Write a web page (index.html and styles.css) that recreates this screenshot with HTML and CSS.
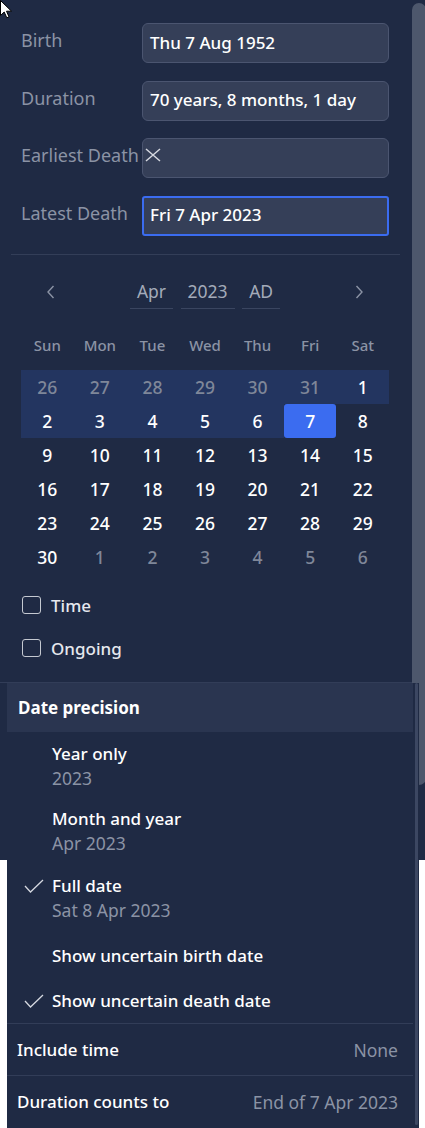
FILE: index.html
```html
<!DOCTYPE html>
<html lang="en">
<head>
<meta charset="utf-8">
<title>Date picker</title>
<link rel="stylesheet" href="styles.css">
</head>
<body>
<div class="screen">
<div class="app">
  <div class="panel">
    <div class="fields">
      <div class="field"><span class="field-label">Birth</span><div class="input">Thu 7 Aug 1952</div></div>
      <div class="field"><span class="field-label">Duration</span><div class="input">70 years, 8 months, 1 day</div></div>
      <div class="field"><span class="field-label">Earliest Death</span><div class="input input-empty"><svg class="clear-icon" width="16" height="14" viewBox="0 0 16 14"><path d="M1 1 L15 13 M15 1 L1 13" fill="none" stroke="#d5d8e0" stroke-width="1.5"/></svg></div></div>
      <div class="field"><span class="field-label">Latest Death</span><div class="input input-focus">Fri 7 Apr 2023</div></div>
    </div>
    <div class="rule"></div>
    <div class="cal-nav">
      <button class="nav-btn nav-prev"><svg width="10" height="14" viewBox="0 0 10 14"><polyline points="7.5,1 2,7 7.5,13" fill="none" stroke="#8b93a5" stroke-width="1.4"/></svg></button>
      <div class="nav-selects"><span class="sel">Apr</span><span class="sel">2023</span><span class="sel">AD</span></div>
      <button class="nav-btn nav-next"><svg width="10" height="14" viewBox="0 0 10 14"><polyline points="2.5,1 8,7 2.5,13" fill="none" stroke="#8b93a5" stroke-width="1.4"/></svg></button>
    </div>
    <div class="weekdays"><span>Sun</span><span>Mon</span><span>Tue</span><span>Wed</span><span>Thu</span><span>Fri</span><span>Sat</span></div>
    <div class="days">
      <span class="day out range">26</span><span class="day out range">27</span><span class="day out range">28</span><span class="day out range">29</span><span class="day out range">30</span><span class="day out range">31</span><span class="day range">1</span>
      <span class="day range">2</span><span class="day range">3</span><span class="day range">4</span><span class="day range">5</span><span class="day range">6</span><span class="day selected">7</span><span class="day">8</span>
      <span class="day">9</span><span class="day">10</span><span class="day">11</span><span class="day">12</span><span class="day">13</span><span class="day">14</span><span class="day">15</span>
      <span class="day">16</span><span class="day">17</span><span class="day">18</span><span class="day">19</span><span class="day">20</span><span class="day">21</span><span class="day">22</span>
      <span class="day">23</span><span class="day">24</span><span class="day">25</span><span class="day">26</span><span class="day">27</span><span class="day">28</span><span class="day">29</span>
      <span class="day">30</span><span class="day out">1</span><span class="day out">2</span><span class="day out">3</span><span class="day out">4</span><span class="day out">5</span><span class="day out">6</span>
    </div>
    <div class="checks">
      <label class="check"><span class="box"></span>Time</label>
      <label class="check"><span class="box"></span>Ongoing</label>
    </div>
    <div class="panel-divider"></div>
  </div>
  <div class="scrollbar"><div class="thumb"></div></div>
</div>

<div class="menu">
  <div class="menu-body">
    <div class="menu-head">Date precision</div>
    <div class="opt opt-first">
      <div class="opt-title">Year only</div>
      <div class="opt-sub">2023</div>
    </div>
    <div class="opt opt-second">
      <div class="opt-title">Month and year</div>
      <div class="opt-sub">Apr 2023</div>
    </div>
    <div class="opt">
      <svg class="opt-check" width="20" height="14" viewBox="0 0 20 14"><polyline points="1,7 6.5,13 19,1" fill="none" stroke="#d5d8e0" stroke-width="1.3"/></svg>
      <div class="opt-title">Full date</div>
      <div class="opt-sub">Sat 8 Apr 2023</div>
    </div>
    <div class="opt">
      <div class="opt-title">Show uncertain birth date</div>
    </div>
    <div class="opt opt-last">
      <svg class="opt-check" width="20" height="14" viewBox="0 0 20 14"><polyline points="1,7 6.5,13 19,1" fill="none" stroke="#d5d8e0" stroke-width="1.3"/></svg>
      <div class="opt-title">Show uncertain death date</div>
    </div>
    <div class="menu-sep"></div>
    <div class="menu-row"><span class="menu-row-label">Include time</span><span class="menu-row-value">None</span></div>
    <div class="menu-sep"></div>
    <div class="menu-row"><span class="menu-row-label">Duration counts to</span><span class="menu-row-value">End of 7 Apr 2023</span></div>
  </div>
  <div class="menu-scroll"><div class="menu-thumb"></div></div>
</div>

<svg class="cursor" width="13" height="20" viewBox="0 0 13 20"><path d="M0.5 0.5 L0.5 15.5 L4.2 12 L6.8 17.8 L9 16.8 L6.5 11.2 L11.5 11.2 Z" fill="#fff" stroke="#000" stroke-width="1"/></svg>
</div>
</body>
</html>
```

FILE: styles.css
```css
* { box-sizing: border-box; }

html, body {
  margin: 0;
  background: #ffffff;
}

body {
  font-family: "Noto Sans", "Open Sans", "DejaVu Sans", sans-serif;
}

.screen {
  position: relative;
  width: 425px;
  height: 1128px;
  overflow: hidden;
}

.app {
  width: 425px;
  height: 860px;
  display: flex;
  background: #1f2a44;
  color: #ffffff;
}

.panel {
  width: 412px;
  flex: none;
  padding: 23px 23px 0 21px;
}

.fields {
  display: flex;
  flex-direction: column;
  gap: 17.5px;
}

.field {
  display: grid;
  grid-template-columns: 121px 1fr;
  align-items: center;
  height: 40px;
}

.field-label {
  font-size: 18px;
  color: #8b93a5;
  padding-bottom: 6px;
  white-space: nowrap;
}

.input {
  height: 40px;
  display: flex;
  align-items: center;
  padding: 0 7px 2px;
  background: #353f58;
  border: 1px solid #4b5570;
  border-radius: 6px;
  font-size: 17px;
  font-weight: 500;
  color: #ffffff;
  white-space: nowrap;
}

.input-empty {
  align-items: flex-start;
  padding: 9px 2px 0;
}

.input-focus {
  border: 2px solid #3b6cf0;
  border-radius: 3px;
  padding: 0 6px 2px;
}

.rule {
  height: 1px;
  background: #333e58;
  margin: 18.5px -11px 0 -10px;
}

.cal-nav {
  display: flex;
  align-items: center;
  height: 34px;
  margin-top: 20px;
}

.nav-btn {
  width: 40px;
  height: 34px;
  padding: 0;
  border: 0;
  background: none;
  display: flex;
  align-items: center;
  justify-content: center;
}

.nav-prev { margin-left: 10px; }
.nav-next { margin-right: 10px; }

.nav-selects {
  flex: 1;
  height: 100%;
  display: flex;
  justify-content: center;
  gap: 7.5px;
}

.sel {
  display: flex;
  align-items: center;
  padding: 0 7px 1px;
  border-bottom: 1px solid #3a4560;
  font-size: 17.5px;
  color: #a3aab9;
}

.weekdays {
  display: grid;
  grid-template-columns: repeat(7, 1fr);
  align-items: center;
  height: 34px;
  margin-top: 19px;
  text-align: center;
  font-size: 15px;
  font-weight: 500;
  color: #8b93a5;
}

.days {
  display: grid;
  grid-template-columns: repeat(7, 1fr);
  grid-auto-rows: 34px;
  margin-top: 8px;
}

.day {
  display: flex;
  align-items: center;
  justify-content: center;
  font-size: 17.5px;
  font-weight: 500;
  color: #ffffff;
}

.day.out { color: #7f8799; }
.day.range { background: #233560; }
.day.selected {
  background: #3b6cf0;
  border-radius: 3px;
}

.checks {
  margin-top: 16px;
  display: flex;
  flex-direction: column;
  gap: 13px;
}

.check {
  display: flex;
  align-items: center;
  gap: 10px;
  height: 30px;
  font-size: 17px;
  font-weight: 500;
  color: #e6e8ee;
}

.box {
  width: 19px;
  height: 18px;
  margin-left: 1px;
  border: 1.5px solid #c5c9d1;
  border-radius: 3px;
}

.panel-divider {
  height: 1px;
  background: #323d58;
  margin: 19px -23px 0 -21px;
}

.scrollbar {
  width: 13px;
  flex: none;
  overflow: hidden;
  padding-top: 3px;
}

.thumb {
  width: 14px;
  height: 782px;
  background: #4d576c;
  border-radius: 7px;
}

/* Dropdown menu overlay */
.menu {
  position: absolute;
  left: 7px;
  top: 683px;
  width: 412px;
  height: 445px;
  display: flex;
  background: #1f2a44;
  color: #ffffff;
}

.menu-body {
  flex: 1;
  font-size: 17px;
}

.menu-head {
  height: 49px;
  display: flex;
  align-items: center;
  padding-left: 11px;
  background: #2a3550;
  font-weight: 700;
}

.opt {
  position: relative;
  padding: 9px 0 11px 45px;
  line-height: 25px;
}

.opt-first { padding-bottom: 6px; }
.opt-second { padding-bottom: 8px; }
.opt-last { padding-bottom: 10px; }

.opt-title { font-weight: 500; color: #ffffff; }
.opt-sub { color: #8b93a5; font-size: 17.5px; }

.opt-check {
  position: absolute;
  left: 17px;
  top: 15px;
}

.menu-sep {
  height: 1px;
  background: #323d58;
}

.menu-row {
  height: 51px;
  display: flex;
  align-items: center;
  justify-content: space-between;
  padding: 0 15px 0 10px;
}

.menu-row-label { font-weight: 500; }
.menu-row-value { color: #8b93a5; font-size: 17.5px; }

.menu-scroll {
  width: 6px;
  flex: none;
  padding-left: 2px;
}

.menu-thumb {
  width: 3px;
  height: 442px;
  background: #3c4762;
  border-radius: 2px;
}

.cursor {
  position: absolute;
  left: 0;
  top: 0;
}
```
